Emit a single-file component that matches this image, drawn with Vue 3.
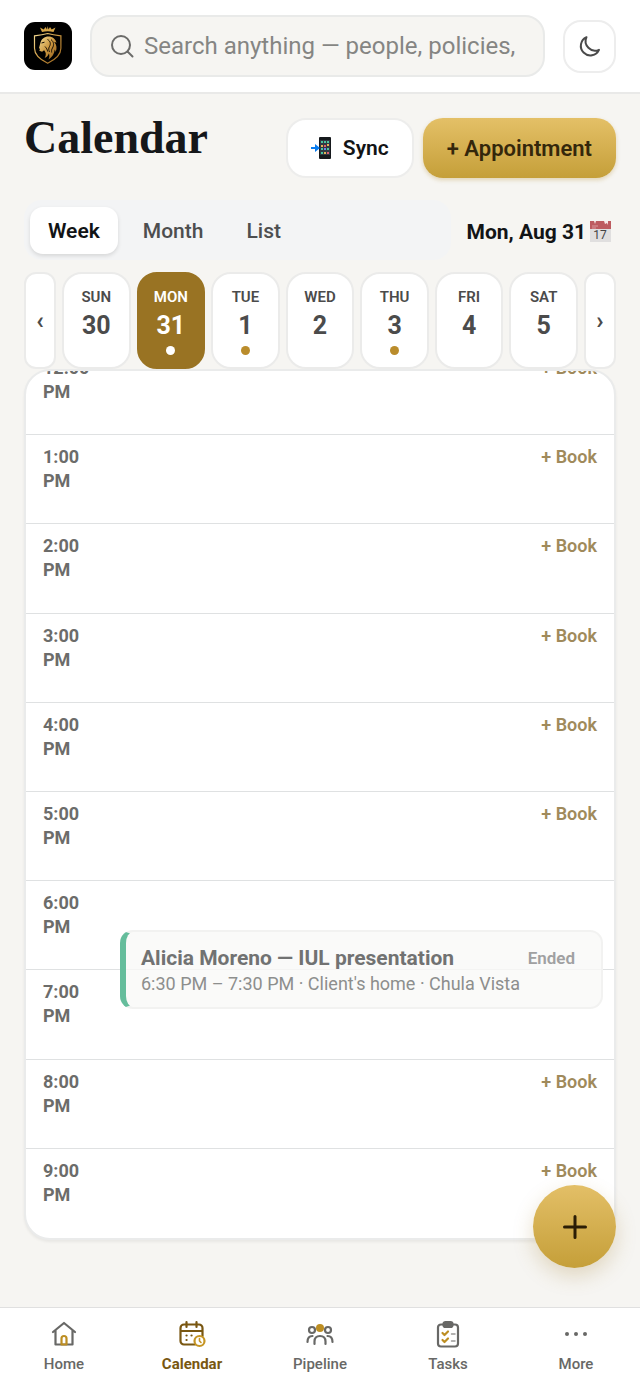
<template>
  <div class="app">
    <header class="topbar">
      <a href="#" class="logo" aria-label="Dashboard">
        <svg viewBox="0 0 48 48" width="48" height="48">
          <defs>
            <linearGradient id="gold" x1="0" y1="0" x2="1" y2="1">
              <stop offset="0" stop-color="#f5dc94" />
              <stop offset="0.5" stop-color="#cb9740" />
              <stop offset="1" stop-color="#94601c" />
            </linearGradient>
          </defs>
          <rect width="48" height="48" rx="11" fill="#000" />
          <path d="M18 10 16 5.500l3.800 2L21.500 5l1.500 2.500L23.700 4l.8 3.500L26 5l1.700 2.500 3.800-2-2 4.500q-5.700-1.400-11.500 0z" fill="#d6a548" />
          <path d="M23.700 11.500c-4 1-8.500 1.700-13.200 2.300v12.500c0 7 5.300 11.200 13.200 15 7.900-3.800 13.200-8 13.200-15V13.800c-4.700-.6-9.200-1.300-13.200-2.300z" fill="none" stroke="url(#gold)" stroke-width="1.200" />
          <path d="M16.500 20.500c1-3.500 4-6 8-6 4 0 7.200 2.500 8 6.500-.8-.8-1.500-1-2.200-1 2.400 2.800 3 6.500 1.300 10-.1-1.200-.5-2-.9-2.500-.2 4.500-2.500 7.500-6.200 10 1.200-2.500 1-4.300.4-6-1.100 2.500-2.400 3.700-4.200 4.500 1.700-3.400 1.500-5.500-.6-7.800l-2 1.600-2.800-1 .7-1.700-1-1.100z" fill="url(#gold)" />
          <path d="M17.500 21l3-.8M23.500 17.500c3 1.500 3.500 4.500 2 7-1.300 2-.7 3.500 0 5.500M27 17.500c3 2.500 3.200 5.500 1.500 8.500-1 1.400-1 3-.8 4.500M21 24.500c1.200 1.500 2.500 3 2.600 5" fill="none" stroke="#181006" stroke-width="1" />
        </svg>
      </a>
      <div class="search">
        <svg viewBox="0 0 24 24" width="24" height="24" fill="none" stroke="currentColor" stroke-width="2" stroke-linecap="round">
          <circle cx="11" cy="11" r="9" />
          <path d="M17.500 17.500 22.500 22.500" />
        </svg>
        <input v-model="query" type="text" aria-label="Search" placeholder="Search anything — people, policies," />
      </div>
      <button class="theme-btn" type="button" aria-label="Toggle dark mode">
        <svg viewBox="0 0 24 24" width="24" height="24" fill="none" stroke="currentColor" stroke-width="2" stroke-linejoin="round">
          <path d="M8.500 3.200A9.500 9.500 0 1 0 21 15.800 9.500 9.500 0 0 1 8.500 3.200z" />
        </svg>
      </button>
    </header>

    <main class="content">
      <div class="title-row">
        <h1>Calendar</h1>
        <div class="actions">
          <button class="btn" type="button">
            <svg viewBox="0 0 20 22" width="20" height="22">
              <rect x="8" y="0" width="12" height="22" rx="1" fill="#16191d" />
              <rect x="9" y="3" width="10" height="15" fill="#303a43" />
              <path d="M10 5h2M13 5h2M16 5h2M10 12h2M16 12h2M10 16h2" stroke="#49c6a0" stroke-width="2" />
              <path d="M16 8h2M10 9h2M13 16h2" stroke="#e1b556" stroke-width="2" />
              <path d="M13 9h2M16 16h2" stroke="#db5d72" stroke-width="2" />
              <path d="M13 12h2" stroke="#6a87f0" stroke-width="2" />
              <path d="M0 10h4V7l5 4-5 4v-3H0z" fill="#087cf0" />
            </svg>
            <span>Sync</span>
          </button>
          <button class="btn btn-gold" type="button">+ Appointment</button>
        </div>
      </div>

      <div class="view-row">
        <div class="segments">
          <button
            v-for="name in views"
            :key="name"
            type="button"
            class="segment"
            :class="{ active: name === view }"
            @click="view = name"
          >
            {{ name }}
          </button>
        </div>
        <button class="date-btn" type="button">
          <span>Mon, Aug 31</span>
          <svg viewBox="0 0 21 21" width="21" height="21">
            <rect width="21" height="21" fill="#e0dfdf" />
            <path d="M0 0h21v8H0z" fill="#bd5b60" />
            <path d="M4 0l1 3 1-3zM14 0l1 3 2-1 1 2V0z" fill="#f7e9e8" />
            <path d="M2 5h6M2 7h4" stroke="#d99a9c" stroke-width="1" />
            <text x="10" y="18" text-anchor="middle" class="cal-num">17</text>
          </svg>
        </button>
      </div>

      <div class="days">
        <button class="day-nav" type="button" aria-label="Previous week">‹</button>
        <button
          v-for="day in days"
          :key="day.num"
          type="button"
          class="day"
          :class="{ selected: day.num === selected }"
          @click="selected = day.num"
        >
          <span class="day-name">{{ day.name }}</span>
          <span class="day-num">{{ day.num }}</span>
          <span v-if="day.busy" class="day-dot"></span>
        </button>
        <button class="day-nav" type="button" aria-label="Next week">›</button>
      </div>

      <section class="timeline">
        <div class="hours">
          <div v-for="hour in hours" :key="hour.label" class="hour">
            <span class="hour-label">{{ hour.label }}</span>
            <button v-if="hour.free" class="book-btn" type="button">+ Book</button>
          </div>
          <div
            v-for="item in events"
            :key="item.title"
            class="event-slot"
            :style="{ top: (item.start - 12) * 10 + '%', height: (item.end - item.start) * 10 + '%' }"
          >
            <article class="event">
              <div class="event-head">
                <strong>{{ item.title }}</strong>
                <span class="event-status">{{ item.status }}</span>
              </div>
              <p>{{ item.detail }}</p>
            </article>
          </div>
        </div>
      </section>
    </main>

    <button class="fab" type="button" aria-label="Add">
      <svg viewBox="0 0 24 24" width="24" height="24" fill="none" stroke="currentColor" stroke-width="3" stroke-linecap="round">
        <path d="M12 1.500v21M1.500 12h21" />
      </svg>
    </button>

    <nav class="tabbar">
      <a href="#" class="tab">
        <svg viewBox="0 0 28 28" width="28" height="28" fill="none" stroke="currentColor" stroke-width="2.200" stroke-linecap="round" stroke-linejoin="round">
          <path d="M3 12 14 3l11 9M5.500 10.500V24.500h17V10.500" />
          <path d="M11.500 24.500v-6a2.500 2.500 0 0 1 5 0v6z" stroke="#bd8e22" />
        </svg>
        <span>Home</span>
      </a>
      <a href="#" class="tab active">
        <svg viewBox="0 0 28 28" width="28" height="28" fill="none" stroke="currentColor" stroke-width="2.200" stroke-linecap="round" stroke-linejoin="round">
          <path d="M17 24.500H6A3.500 3.500 0 0 1 2.500 21V8A3.500 3.500 0 0 1 6 4.500h15A3.500 3.500 0 0 1 24.500 8v8M2.500 11h22M8.500 2v5M18.500 2v5" />
          <path d="M8.500 15.500h.1M13.500 15.500h.1M8.500 20h.1" />
          <circle cx="21.500" cy="21" r="5" fill="#fff" stroke="#c69523" />
          <path d="M21.500 18.500V21l1.500 1.500" stroke="#c69523" stroke-width="1.600" />
        </svg>
        <span>Calendar</span>
      </a>
      <a href="#" class="tab">
        <svg viewBox="0 0 28 28" width="28" height="28" fill="none" stroke="currentColor" stroke-width="2.200" stroke-linecap="round">
          <circle cx="6" cy="10" r="3" />
          <circle cx="22" cy="10" r="3" />
          <circle cx="14" cy="8" r="4" fill="#bd8e22" stroke="none" />
          <path d="M1.500 22c0-4 1.500-6 5-6M26.500 22c0-4-1.500-6-5-6M8.500 24v-2.500c0-3.500 2-5.500 5.500-5.500s5.500 2 5.500 5.500V24" />
        </svg>
        <span>Pipeline</span>
      </a>
      <a href="#" class="tab">
        <svg viewBox="0 0 28 28" width="28" height="28" fill="none" stroke="currentColor" stroke-width="2.200" stroke-linecap="round" stroke-linejoin="round">
          <rect x="4" y="4.500" width="20" height="22" rx="3" />
          <rect x="9.500" y="2" width="9" height="5" rx="2" fill="currentColor" />
          <path d="M8.500 13l2 2 3.500-3.500M8.500 20l2 2 3.500-3.500" stroke="#bd8e22" />
          <path d="M17.500 14h3.500M17.500 21h3.500" stroke="#999896" stroke-width="1.500" />
        </svg>
        <span>Tasks</span>
      </a>
      <a href="#" class="tab">
        <svg viewBox="0 0 28 28" width="28" height="28" fill="currentColor">
          <circle cx="5" cy="14" r="2" />
          <circle cx="14" cy="14" r="2" />
          <circle cx="23" cy="14" r="2" />
        </svg>
        <span>More</span>
      </a>
    </nav>
  </div>
</template>

<script setup>
import { ref } from 'vue'

const query = ref('')
const views = ['Week', 'Month', 'List']
const view = ref('Week')
const selected = ref(31)

const days = [
  { name: 'SUN', num: 30 },
  { name: 'MON', num: 31, busy: true },
  { name: 'TUE', num: 1, busy: true },
  { name: 'WED', num: 2 },
  { name: 'THU', num: 3, busy: true },
  { name: 'FRI', num: 4 },
  { name: 'SAT', num: 5 }
]

const hours = [
  { label: '12:00 PM', free: true },
  { label: '1:00 PM', free: true },
  { label: '2:00 PM', free: true },
  { label: '3:00 PM', free: true },
  { label: '4:00 PM', free: true },
  { label: '5:00 PM', free: true },
  { label: '6:00 PM', free: false },
  { label: '7:00 PM', free: false },
  { label: '8:00 PM', free: true },
  { label: '9:00 PM', free: true }
]

// start and end are hours on a 24h clock
const events = [
  {
    title: 'Alicia Moreno — IUL presentation',
    detail: "6:30 PM – 7:30 PM · Client's home · Chula Vista",
    status: 'Ended',
    start: 18.5,
    end: 19.5
  }
]
</script>

<style>
body {
  margin: 0;
  background: #f6f5f2;
}
</style>

<style scoped>
.app {
  min-height: 100vh;
  font-family: Roboto, "Liberation Sans", sans-serif;
  color: #15171a;
}

* {
  box-sizing: border-box;
}

button,
input {
  font-family: inherit;
  margin: 0;
}

button {
  cursor: pointer;
}

svg {
  display: block;
  flex-shrink: 0;
}

.topbar {
  display: flex;
  align-items: center;
  gap: 18px;
  padding: 15px 24px;
  background: #fff;
  border-bottom: 2px solid #e9e9e8;
}

.search {
  flex: 1;
  min-width: 0;
  height: 62px;
  display: flex;
  align-items: center;
  gap: 10px;
  padding: 0 18px;
  border: 2px solid #e9eae9;
  border-radius: 20px;
  background: #f6f5f2;
  color: #6b6b69;
}

.search input {
  flex: 1;
  min-width: 0;
  padding: 0;
  border: none;
  outline: none;
  background: transparent;
  font-size: 24px;
  color: #15171a;
}

.search input::placeholder {
  color: #858583;
  opacity: 1;
}

.theme-btn {
  width: 53px;
  height: 53px;
  padding: 0;
  display: flex;
  align-items: center;
  justify-content: center;
  border: 2px solid #ededed;
  border-radius: 18px;
  background: #fff;
  color: #4a4a4a;
}

.content {
  padding: 24px 24px 140px;
}

.title-row {
  display: flex;
  align-items: flex-start;
  justify-content: space-between;
}

h1 {
  margin: 0;
  font-family: "Liberation Serif", serif;
  font-size: 46px;
  line-height: 40px;
  font-weight: 700;
}

.actions {
  display: flex;
  gap: 9px;
}

.btn {
  height: 60px;
  display: flex;
  align-items: center;
  gap: 12px;
  padding: 0 23px;
  border: 2px solid #ededec;
  border-radius: 20px;
  background: #fff;
  font-size: 21px;
  font-weight: 600;
  color: #121416;
}

.btn-gold {
  padding: 0 24px;
  border: none;
  background: linear-gradient(#e4c067, #c59f39);
  box-shadow: 0 2px 4px rgba(176, 133, 34, 0.3);
  font-size: 22px;
  color: #34270b;
}

.view-row {
  display: flex;
  align-items: center;
  gap: 16px;
  margin-top: 22px;
}

.segments {
  flex: 1;
  display: flex;
  gap: 7px;
  padding: 7px 6px 6px;
  border-radius: 18px;
  background: #f3f4f5;
}

.segment {
  height: 47px;
  padding: 0 18px;
  border: none;
  border-radius: 13px;
  background: transparent;
  font-size: 21px;
  font-weight: 500;
  color: #4d4e4f;
}

.segment.active {
  background: #fff;
  box-shadow: 0 2px 4px rgba(0, 0, 0, 0.12);
  font-weight: 600;
  color: #121416;
}

.date-btn {
  display: flex;
  align-items: center;
  gap: 4px;
  padding: 3px 5px 0 0;
  border: none;
  background: transparent;
  font-size: 21px;
  font-weight: 700;
  color: #121416;
}

.cal-num {
  font-size: 12px;
  font-weight: 400;
  fill: #454545;
}

.days {
  display: grid;
  grid-template-columns: 32px repeat(7, 1fr) 32px;
  gap: 6px;
  margin-top: 12px;
}

.day,
.day-nav {
  height: 97px;
  padding: 0;
  border: 2px solid #ebebea;
  border-radius: 20px;
  background: #fff;
  color: #4b4b4b;
}

.day-nav {
  border-radius: 12px;
  font-size: 24px;
  font-weight: 700;
}

.day {
  display: flex;
  flex-direction: column;
  align-items: center;
  padding-top: 12px;
}

.day-name {
  font-size: 15px;
  line-height: 22px;
  font-weight: 600;
}

.day-num {
  font-size: 25px;
  line-height: 36px;
  font-weight: 700;
}

.day-dot {
  width: 9px;
  height: 9px;
  margin-top: 2px;
  border-radius: 50%;
  background: #ba8c2b;
}

.day.selected {
  border-color: #997323;
  background: #997323;
  color: #fff;
}

.day.selected .day-dot {
  background: #fff;
}

.timeline {
  overflow: hidden;
  border: 2px solid #eaebeb;
  border-radius: 26px;
  background: #fff;
  box-shadow: 0 2px 3px rgba(0, 0, 0, 0.06);
}

/* the list is scrolled a little, so noon starts above the card's edge */
.hours {
  position: relative;
  display: grid;
  grid-auto-rows: 1fr;
  height: 892px;
  margin-top: -25px;
}

.hour {
  display: flex;
  align-items: flex-start;
  justify-content: space-between;
  padding: 10px 17px 0;
  border-bottom: 1px solid #dfe1e2;
}

.hour:nth-child(10) {
  border-bottom: none;
}

.hour-label {
  width: 52px;
  font-size: 18px;
  line-height: 24px;
  font-weight: 700;
  color: #6c6c6a;
}

.book-btn {
  padding: 0;
  border: none;
  background: transparent;
  font-size: 18px;
  line-height: 24px;
  font-weight: 600;
  color: #a08a5b;
}

.event-slot {
  position: absolute;
  left: 94px;
  right: 11px;
  padding: 4px 0 6px;
}

.event {
  height: 100%;
  padding: 12px 26px 0 15px;
  border: 2px solid #f2f2f1;
  border-left: 6px solid #65bd9c;
  border-radius: 13px;
  background: rgba(249, 249, 247, 0.8);
}

.event-head {
  display: flex;
  align-items: center;
  justify-content: space-between;
  line-height: 28px;
}

.event-head strong {
  font-size: 21px;
  font-weight: 700;
  color: #717272;
}

.event-status {
  font-size: 17px;
  font-weight: 600;
  color: #a0a0a1;
}

.event p {
  margin: 0;
  font-size: 18px;
  line-height: 24px;
  color: #8d8e8d;
}

.fab {
  position: fixed;
  right: 24px;
  bottom: 119px;
  width: 83px;
  height: 83px;
  padding: 0;
  display: flex;
  align-items: center;
  justify-content: center;
  border: none;
  border-radius: 50%;
  background: linear-gradient(#e3bf67, #c59f39);
  box-shadow: 0 8px 20px rgba(160, 125, 45, 0.25);
  color: #2b1d05;
}

.tabbar {
  position: fixed;
  left: 0;
  right: 0;
  bottom: 0;
  display: grid;
  grid-template-columns: repeat(5, 1fr);
  height: 80px;
  padding-top: 12px;
  border-top: 1px solid #e0e0e0;
  background: #fff;
}

.tab {
  display: flex;
  flex-direction: column;
  align-items: center;
  gap: 5px;
  font-size: 15px;
  line-height: 22px;
  font-weight: 500;
  color: #686866;
  text-decoration: none;
}

.tab.active {
  font-weight: 700;
  color: #795711;
}
</style>
